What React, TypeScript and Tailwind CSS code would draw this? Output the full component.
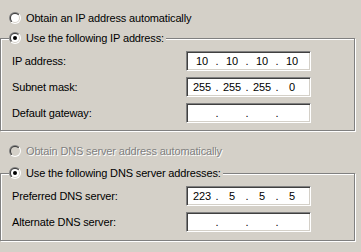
import React, { useId } from 'react';

const Radio = ({ checked, disabled }: { checked?: boolean; disabled?: boolean }) => {
  const id = useId().replace(/:/g, '');
  return (
    <svg width="12" height="12" viewBox="0 0 12 12" className="shrink-0">
      <defs>
        <linearGradient id={`o${id}`} x1="0" y1="0" x2="1" y2="1">
          <stop offset="0.5" stopColor="#808080" />
          <stop offset="0.5" stopColor="#ffffff" />
        </linearGradient>
        <linearGradient id={`i${id}`} x1="0" y1="0" x2="1" y2="1">
          <stop offset="0.5" stopColor="#404040" />
          <stop offset="0.5" stopColor="#d4d0c8" />
        </linearGradient>
      </defs>
      <circle cx="6" cy="6" r="6" fill={`url(#o${id})`} />
      <circle cx="6" cy="6" r="5" fill={`url(#i${id})`} />
      <circle cx="6" cy="6" r="4" fill={disabled ? '#d4d0c8' : '#ffffff'} />
      {checked && <circle cx="6" cy="6" r="2" fill="#000000" />}
    </svg>
  );
};

const IpBox = ({ octets }: { octets?: string[] }) => (
  <div className="w-[125px] h-[20px] bg-white border-t border-l border-t-[#808080] border-l-[#808080] border-b border-r border-b-white border-r-white shadow-[inset_1px_1px_0_#404040,inset_-1px_-1px_0_#d4d0c8] flex items-center pl-[3px]">
    {[0, 1, 2, 3].map(i => (
      <React.Fragment key={i}>
        <span className="w-[24px] text-center">{octets ? octets[i] : ''}</span>
        {i < 3 && <span className="w-[6px] text-center">.</span>}
      </React.Fragment>
    ))}
  </div>
);

const Row = ({ label, octets }: { label: string; octets?: string[] }) => (
  <div className="flex items-center h-[20px]">
    <span className="w-[174px] pl-[11px] box-content">{label}</span>
    <IpBox octets={octets} />
  </div>
);

export default function App() {
  return (
    <div className="w-[361px] h-[252px] bg-[#d4d0c8] overflow-hidden text-[11px] leading-none tracking-[-0.15px] text-black font-['Liberation_Sans',Arial,sans-serif]">
      <div className="flex items-center gap-[5px] pl-[9px] pt-[12px] h-[24px] box-border">
        <Radio />
        <span>Obtain an IP address automatically</span>
      </div>

      <div className="relative mt-[14px] w-[355px] h-[93px] border border-[#808080] shadow-[inset_1px_1px_0_#fff,1px_1px_0_#fff] pt-[12px] flex flex-col gap-[6px]">
        <div className="absolute left-[8px] top-[-7px] h-[12px] flex items-center gap-[5px] bg-[#d4d0c8] pr-[2px]">
          <Radio checked />
          <span>Use the following IP address:</span>
        </div>
        <Row label="IP address:" octets={['10', '10', '10', '10']} />
        <Row label="Subnet mask:" octets={['255', '255', '255', '0']} />
        <Row label="Default gateway:" />
      </div>

      <div className="flex items-center gap-[5px] pl-[9px] mt-[14px] h-[12px]">
        <Radio disabled />
        <span className="text-[#808080] [text-shadow:1px_1px_0_#fff]">Obtain DNS server address automatically</span>
      </div>

      <div className="relative mt-[16px] w-[355px] h-[68px] border border-[#808080] shadow-[inset_1px_1px_0_#fff,1px_1px_0_#fff] pt-[12px] flex flex-col gap-[6px]">
        <div className="absolute left-[8px] top-[-7px] h-[12px] flex items-center gap-[5px] bg-[#d4d0c8] pr-[2px]">
          <Radio checked />
          <span>Use the following DNS server addresses:</span>
        </div>
        <Row label="Preferred DNS server:" octets={['223', '5', '5', '5']} />
        <Row label="Alternate DNS server:" />
      </div>
    </div>
  );
}
